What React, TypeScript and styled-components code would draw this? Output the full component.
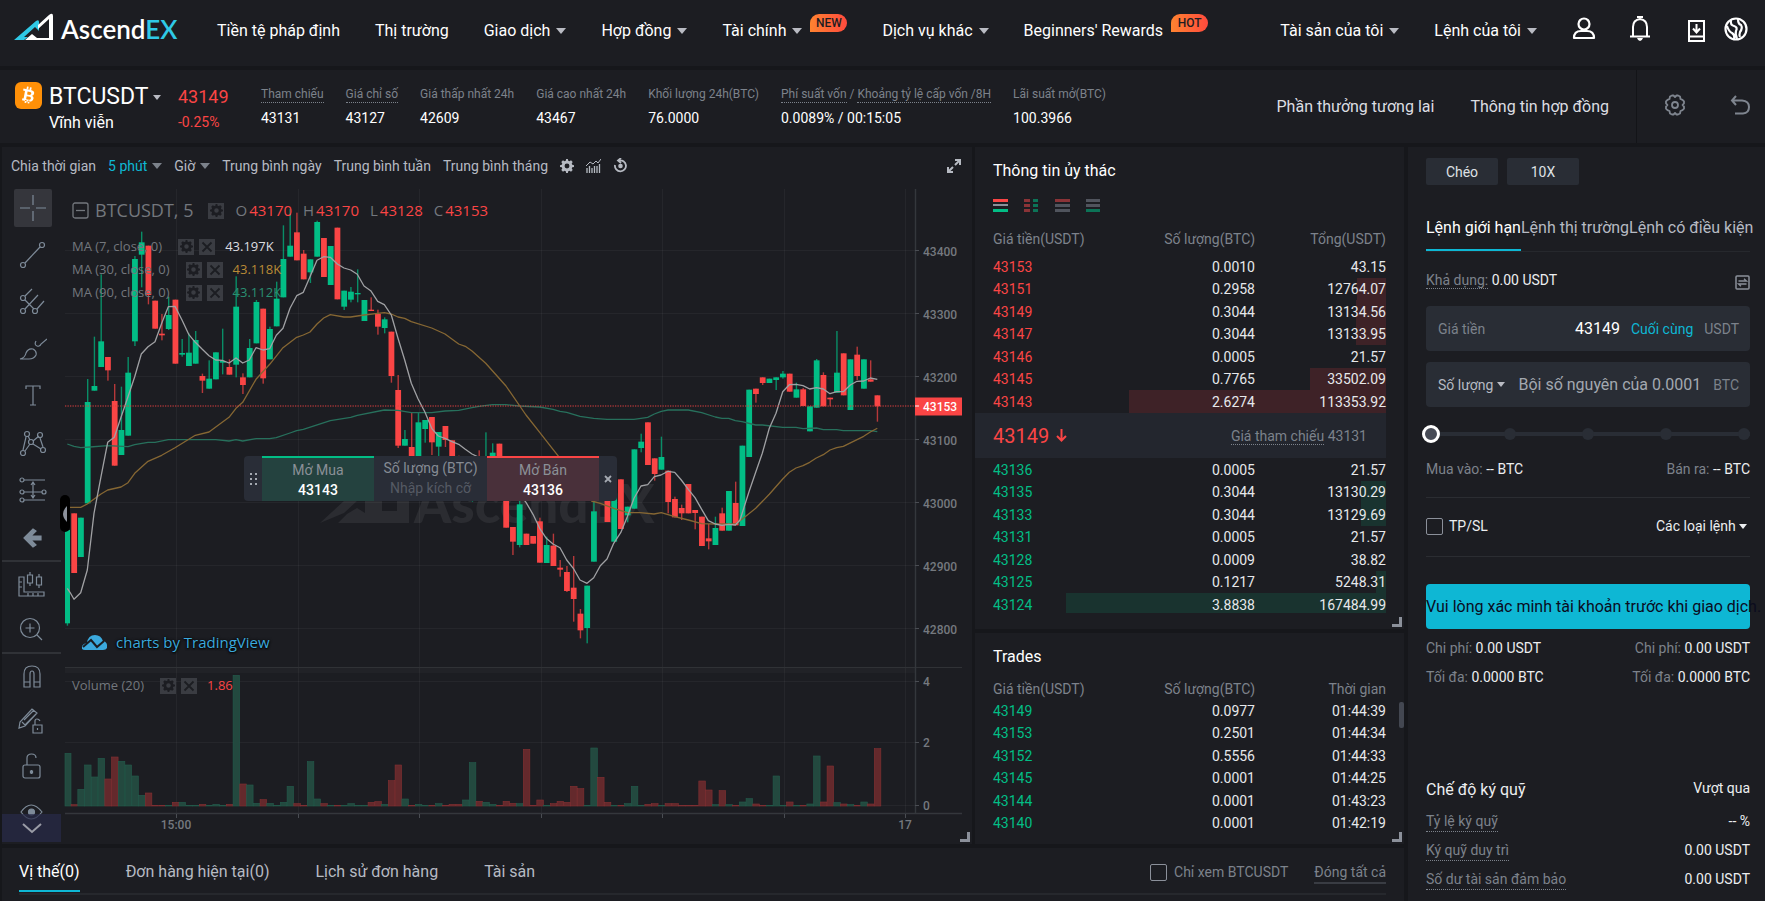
import React from "react";
import styled, { createGlobalStyle } from "styled-components";

const c = {
  gap: "#16171b",
  panel: "#1c1d22",
  line: "#26282d",
  field: "#292d35",
  text: "#ffffff",
  soft: "#b6bac2",
  dim: "#7c828b",
  red: "#fa4545",
  green: "#02bd85",
  teal: "#0eb7d4",
};

const GlobalStyle = createGlobalStyle`
  *, *::before, *::after { box-sizing: border-box; }
  body { margin: 0; background: ${c.gap}; color: ${c.text}; font: 14px/20px Roboto, "Liberation Sans", sans-serif; }
  button, input, select { font: inherit; color: inherit; }
  button { background: none; border: 0; padding: 0; cursor: pointer; }
  a { color: inherit; text-decoration: none; }
  svg { display: block; flex: none; }
`;

/* ---------- shared parts ---------- */

const Page = styled.div`
  display: flex;
  flex-direction: column;
  gap: 4px;
  min-height: 100vh;
  overflow: hidden;
`;

const Panel = styled.section`
  position: relative;
  background: ${c.panel};
`;

const Caret = styled.i<{ $small?: boolean; $color?: string }>`
  display: inline-block;
  flex: none;
  border-style: solid;
  border-color: transparent;
  border-width: ${(p) => (p.$small ? "5px 4px 0" : "6px 5px 0")};
  border-top-color: ${(p) => p.$color || "#b9bbc3"};
`;

const Dotted = styled.span`
  border-bottom: 1px dotted ${c.dim};
  color: ${c.dim};
`;

const Corner = styled.span`
  position: absolute;
  right: 2px;
  bottom: 2px;
  width: 10px;
  height: 10px;
  border: solid #8b909a;
  border-width: 0 3px 3px 0;
`;

const Title = styled.h2`
  margin: 0;
  font-size: 16px;
  line-height: 20px;
  font-weight: 400;
`;

const IconButton = styled.button`
  display: flex;
  align-items: center;
  justify-content: center;
`;

const CheckBox = styled.input`
  appearance: none;
  width: 17px;
  height: 17px;
  margin: 0;
  border: 1px solid #8b909a;
  border-radius: 2px;
  &:checked { background: ${c.teal}; }
`;

/* ---------- header ---------- */

const Header = styled.header`
  display: flex;
  align-items: flex-start;
  height: 66px;
  padding: 13px 17px 0 14px;
  background: ${c.panel};
  font-size: 16px;
`;

const Logo = styled.a`
  display: flex;
  width: 203px;
`;

const Nav = styled.nav`
  display: flex;
  align-items: flex-start;
  gap: 35px;
  margin-top: 8px;
  white-space: nowrap;
`;

const NavItem = styled.a`
  display: flex;
  align-items: center;
  gap: 6px;
`;

const Badge = styled.span`
  align-self: flex-start;
  width: 37px;
  height: 18px;
  margin: -7px 0 0 2px;
  border-radius: 9px 9px 9px 0;
  background: linear-gradient(90deg, #ff8330, #ff4a3d);
  color: #1c1d22;
  font-size: 12px;
  line-height: 18px;
  font-weight: 500;
  text-align: center;
`;

const HeaderRight = styled.div`
  display: flex;
  gap: 35px;
  margin-left: auto;
  white-space: nowrap;
`;

const HeaderIcons = styled.div`
  display: flex;
  gap: 18px;
  margin-top: 3px;
`;

/* ---------- market summary ---------- */

const Summary = styled.section`
  display: flex;
  height: 73px;
  background: ${c.panel};
  white-space: nowrap;
`;

const Pair = styled.div`
  display: flex;
  gap: 7px;
  width: 178px;
  padding: 12px 0 0 15px;
`;

const PairText = styled.div`
  padding-top: 2px;
  font-size: 16px;
  line-height: 20px;
`;

const PairName = styled.button`
  display: flex;
  align-items: center;
  gap: 4px;
  margin-bottom: 3px;
  font-size: 23px;
  line-height: 26px;
`;

const Last = styled.div`
  width: 83px;
  padding-top: 14px;
  color: ${c.red};
`;

const LastPrice = styled.div`
  margin-bottom: 2px;
  font-size: 18px;
  line-height: 26px;
`;

const Stats = styled.dl`
  display: flex;
  gap: 22px;
  margin: 0;
  padding-top: 17px;
`;

const StatLabel = styled.dt`
  height: 21px;
  color: ${c.dim};
  font-size: 12px;
  line-height: 15px;
  span { display: inline-block; }
`;

const StatValue = styled.dd`
  margin: 0;
`;

const SummaryLinks = styled.nav`
  display: flex;
  gap: 36px;
  margin-left: auto;
  padding: 27px 27px 0 0;
  color: #dcdee2;
  font-size: 16px;
`;

const SummaryTools = styled.div`
  display: flex;
  align-items: center;
  justify-content: space-between;
  width: 129px;
  padding: 0 15px 3px 27px;
  border-left: 1px solid #131418;
  color: #7f858f;
`;

/* ---------- main areas ---------- */

const Main = styled.main`
  display: flex;
  flex: 1;
  gap: 4px;
  padding-left: 2px;
`;

const LeftArea = styled.div`
  display: flex;
  flex: 1;
  flex-direction: column;
  gap: 4px;
  min-width: 0;
`;

const Upper = styled.div`
  display: flex;
  gap: 3px;
`;

const ChartPanel = styled(Panel)`
  flex: 1;
  min-width: 0;
`;

const ChartBar = styled.div`
  display: flex;
  align-items: center;
  gap: 12px;
  height: 37px;
  padding: 0 10px 0 9px;
  color: ${c.soft};
  white-space: nowrap;
`;

const BarButton = styled.button<{ $active?: boolean }>`
  display: flex;
  align-items: center;
  gap: 5px;
  color: ${(p) => (p.$active ? c.teal : c.soft)};
`;

const ExpandButton = styled(IconButton)`
  margin-left: auto;
`;

const ChartBody = styled.div`
  display: flex;
  height: 660px;
`;

const Tools = styled.div`
  position: relative;
  width: 59px;
  height: 658px;
  overflow: hidden;
  color: #7e8b99;
`;

const Tool = styled.button<{ $short?: boolean; $on?: boolean }>`
  display: flex;
  align-items: center;
  justify-content: center;
  width: 59px;
  height: ${(p) => (p.$short ? 45 : 47)}px;
  padding-left: ${(p) => (p.$short ? 0 : 3)}px;
  svg {
    padding: 5px;
    border-radius: 2px;
    background: ${(p) => (p.$on ? "#35363c" : "none")};
  }
`;

const ToolRule = styled.hr`
  height: 2px;
  margin: 0;
  border: 0;
  background: #303237;
`;

const ToolMore = styled.button`
  position: absolute;
  left: 0;
  bottom: 0;
  display: flex;
  align-items: center;
  justify-content: center;
  width: 59px;
  height: 28px;
  background: rgba(40, 43, 72, 0.7);
  color: #9a9ca6;
`;

const Plot = styled.div`
  position: relative;
  flex: 1;
  min-width: 0;
`;

const DrawerHandle = styled.button`
  position: absolute;
  left: -1px;
  top: 311px;
  display: flex;
  align-items: center;
  justify-content: center;
  width: 10px;
  height: 37px;
  border-radius: 5px;
  background: #000;
`;

const Legend = styled.div`
  position: absolute;
  left: 11px;
  top: 15px;
  color: #73777d;
  font-family: "Open Sans", sans-serif;
  font-size: 13px;
  line-height: 23px;
  white-space: nowrap;
`;

const VolumeLegend = styled(Legend)`
  top: 490px;
`;

const LegendTitle = styled.div`
  display: flex;
  align-items: center;
  margin-bottom: 13px;
  font-size: 15px;
`;

const LegendName = styled.span`
  margin: 0 15px 0 6px;
  font-size: 18px;
`;

const Ohlc = styled.span`
  margin-left: 11px;
  b { color: ${c.red}; font-weight: 400; margin-left: 2px; }
`;

const LegendRow = styled.div<{ $color: string }>`
  display: flex;
  align-items: center;
  gap: 5px;
  height: 23px;
  output { margin-left: 5px; color: ${(p) => p.$color}; }
`;

const LegendText = styled.span`
  margin-right: 11px;
`;

const Chip = styled.button`
  display: flex;
  align-items: center;
  justify-content: center;
  width: 16px;
  height: 16px;
  background: #3a3c42;
  color: #1c1d22;
`;

const QuickTrade = styled.div`
  position: absolute;
  left: 183px;
  top: 272px;
  display: flex;
  height: 45px;
  border-radius: 4px;
  background: #292d37;
  color: #858b94;
  overflow: hidden;
`;

const QuickSide = styled.button<{ $buy?: boolean }>`
  width: 112px;
  border-top: 2px solid ${(p) => (p.$buy ? c.green : c.red)};
  background: ${(p) => (p.$buy ? "#24423f" : "#49303a")};
  color: #8b9097;
  b { display: block; color: #fff; font-weight: 500; }
`;

const QuickSize = styled.label`
  width: 113px;
  padding-top: 2px;
  text-align: center;
  input {
    display: block;
    width: 100%;
    height: 20px;
    padding: 0;
    border: 0;
    background: none;
    text-align: center;
  }
  input::placeholder { color: #555a64; opacity: 1; }
`;

const QuickEdge = styled.button`
  display: flex;
  align-items: center;
  justify-content: center;
  width: 18px;
  color: #a4a9b1;
`;

const Credit = styled.a`
  position: absolute;
  left: 20px;
  top: 447px;
  display: flex;
  align-items: center;
  gap: 8px;
  color: #3ba9dd;
  font: 15px/22px "Open Sans", sans-serif;
  text-shadow: 0 0 3px #000, 0 1px 2px #000;
`;

/* ---------- order book and trades ---------- */

const Middle = styled.div`
  display: flex;
  flex-direction: column;
  gap: 4px;
  width: 429px;
`;

const Book = styled(Panel)`
  padding: 14px 18px 16px;
`;

const Trades = styled(Panel)`
  flex: 1;
  padding: 14px 18px 0;
`;

const BookModes = styled.div`
  display: flex;
  gap: 16px;
  margin: 18px 0 17px;
`;

const DataTable = styled.table`
  width: 100%;
  border-collapse: collapse;
  table-layout: fixed;
  th, td { padding: 0; text-align: right; }
  th { width: 131px; font-weight: 400; color: ${c.dim}; vertical-align: top; }
  th:first-child { width: auto; }
  th:first-child, td:first-child { text-align: left; }
`;

const HeadRow = styled.tr<{ $tall?: boolean }>`
  height: ${(p) => (p.$tall ? 26 : 20)}px;
`;

const DataRow = styled.tr<{ $ask?: boolean }>`
  height: 22px;
  color: #e6e8eb;
  background: linear-gradient(${(p) => (p.$ask ? "#3e2227, #3e2227" : "#19332f, #19332f")}) right / 0 100% no-repeat;
  &:nth-child(odd) { height: 23px; }
  td:first-child { color: ${(p) => (p.$ask ? c.red : c.green)}; }
`;

const Bids = styled.div`
  height: 155px;
  overflow: hidden;
`;

const MidPrice = styled.div`
  display: flex;
  align-items: center;
  height: 45px;
  margin-left: -18px;
  padding: 0 19px 0 18px;
  background: #23262e;
  color: ${c.dim};
  strong { margin-right: 7px; color: ${c.red}; font-size: 20px; font-weight: 400; }
  p { margin: 0 0 0 auto; }
`;

const TradesTitle = styled(Title)`
  margin-bottom: 12px;
`;

const Thumb = styled.span`
  position: absolute;
  right: 0;
  top: 69px;
  width: 5px;
  height: 26px;
  border-radius: 2px;
  background: #434751;
`;

/* ---------- positions bar ---------- */

const Positions = styled(Panel)`
  flex: 1;
  padding: 0 18px 0 17px;
`;

const PositionsRow = styled.div`
  display: flex;
  align-items: flex-start;
  height: 47px;
  padding-top: 14px;
  border-bottom: 2px solid ${c.line};
  white-space: nowrap;
`;

const PositionTab = styled.button<{ $active?: boolean }>`
  height: 30px;
  margin-right: 46px;
  padding-bottom: 9px;
  border-bottom: 2px solid ${(p) => (p.$active ? c.teal : "transparent")};
  color: ${(p) => (p.$active ? "#fff" : c.soft)};
  font-size: 16px;
  line-height: 20px;
`;

const OnlyPair = styled.label`
  display: flex;
  align-items: center;
  gap: 7px;
  margin: 0 26px 0 auto;
  color: ${c.dim};
`;

const CloseAll = styled.button`
  border-bottom: 2px solid #393c43;
  color: ${c.dim};
`;

/* ---------- order form ---------- */

const Form = styled.form`
  width: 357px;
  padding: 11px 15px 0 18px;
  background: ${c.panel};
  overflow: hidden;
  white-space: nowrap;
`;

const Modes = styled.div`
  display: flex;
  gap: 9px;
`;

const Mode = styled.button`
  width: 72px;
  height: 27px;
  border-radius: 2px;
  background: ${c.field};
  color: #dfe1e5;
`;

const OrderTabs = styled.div`
  display: flex;
  margin: 33px 0 18px;
  border-bottom: 1px solid ${c.line};
`;

const OrderTab = styled.button<{ $active?: boolean }>`
  padding-bottom: 11px;
  border-bottom: 2px solid ${(p) => (p.$active ? c.teal : "transparent")};
  color: ${(p) => (p.$active ? "#fff" : c.soft)};
  font-size: 16px;
`;

const Row = styled.div`
  display: flex;
  justify-content: space-between;
  color: #eceef0;
`;

const Key = styled.span`
  color: ${c.dim};
`;

const Balance = styled(Row)`
  align-items: flex-end;
  margin-bottom: 16px;
`;

const Field = styled.div`
  display: flex;
  align-items: center;
  height: 45px;
  margin-bottom: 11px;
  padding: 0 11px 0 12px;
  border-radius: 4px;
  background: ${c.field};
  color: ${c.dim};
  input {
    flex: 1;
    min-width: 0;
    padding: 0;
    border: 0;
    background: none;
    color: #fff;
    font-size: 16px;
    text-align: right;
  }
  input::placeholder { color: #a3a8b0; opacity: 1; }
`;

const LastButton = styled.button`
  margin: 0 11px;
  color: ${c.teal};
`;

const Unit = styled.span`
  margin-left: 12px;
`;

const Picker = styled.span<{ $light?: boolean }>`
  display: flex;
  align-items: center;
  color: ${(p) => (p.$light ? "#eceef0" : c.soft)};
  select {
    appearance: none;
    margin: 0 3px 0 0;
    padding: 0;
    border: 0;
    background: none;
  }
`;

const Slider = styled.div`
  position: relative;
  display: flex;
  justify-content: space-between;
  align-items: center;
  height: 18px;
  margin: 18px 0 16px;
  background: linear-gradient(${c.field}, ${c.field}) center / 100% 4px no-repeat;
  input {
    position: absolute;
    left: -4px;
    top: 0;
    width: calc(100% + 4px);
    height: 18px;
    margin: 0;
    appearance: none;
    background: none;
  }
  input::-webkit-slider-thumb {
    appearance: none;
    width: 18px;
    height: 18px;
    border: 3px solid #fff;
    border-radius: 50%;
    background: #464a55;
  }
`;

const Stop = styled.i`
  width: 12px;
  height: 12px;
  border-radius: 50%;
  background: ${c.field};
`;

const Rule = styled.hr`
  height: 1px;
  margin: 18px 0;
  border: 0;
  background: #2b2d32;
`;

const TpSl = styled.label`
  display: flex;
  align-items: center;
  gap: 6px;
`;

const OrderKinds = styled(Row)`
  margin-bottom: 20px;
  padding-right: 3px;
`;

const Submit = styled.button`
  display: block;
  width: 100%;
  height: 45px;
  margin: 27px 0 9px;
  border-radius: 4px;
  background: ${c.teal};
  color: #0b0c1e;
  font-size: 16px;
  text-align: left;
`;

const CostRow = styled(Row)`
  margin-bottom: 9px;
`;

const MarginHead = styled(Row)`
  margin: 93px 0 11px;
`;

const MarginMode = styled.span`
  line-height: 16px;
`;

const MarginRow = styled(Row)`
  height: 29px;
  ${Dotted} { height: 21px; }
`;

/* ---------- candle data ---------- */

// up/down, body top, body bottom, high, low, volume; vertical values in thirds of a chart unit
type Candle = [0 | 1, number, number, number, number, number];
const candles: Candle[] = [
  [1, 1050, 1330, 1050, 1337, 158], [0, 1000, 1179, 1000, 1179, 4], [1, 1013, 1131, 1013, 1131, 50],
  [1, 666, 970, 597, 970, 123], [1, 618, 632, 470, 632, 87], [1, 484, 561, 283, 561, 143],
  [0, 531, 571, 531, 602, 81], [0, 663, 857, 612, 857, 147], [1, 750, 825, 620, 825, 134],
  [1, 578, 767, 531, 767, 123], [1, 237, 484, 228, 498, 90], [1, 187, 224, 155, 322, 32],
  [0, 197, 345, 197, 373, 39], [0, 362, 446, 362, 446, 2], [0, 461, 466, 402, 481, 2],
  [1, 405, 447, 350, 450, 2], [0, 359, 551, 359, 551, 11], [1, 519, 524, 477, 530, 11],
  [1, 518, 558, 460, 558, 2], [1, 480, 551, 453, 551, 2], [0, 588, 602, 581, 639, 5],
  [1, 596, 626, 541, 626, 2], [1, 517, 598, 517, 598, 5], [1, 543, 548, 446, 583, 2],
  [0, 561, 584, 538, 584, 5], [1, 380, 554, 289, 592, 392], [0, 592, 615, 580, 642, 66],
  [1, 504, 592, 477, 592, 63], [1, 366, 490, 360, 490, 8], [0, 386, 595, 386, 611, 19],
  [1, 447, 538, 440, 538, 8], [1, 356, 439, 305, 439, 2], [1, 237, 352, 136, 352, 11],
  [1, 197, 230, 87, 230, 59], [0, 157, 241, 98, 241, 7], [0, 221, 298, 210, 298, 2],
  [1, 238, 277, 238, 309, 133], [1, 126, 230, 122, 230, 21], [0, 174, 291, 174, 291, 7],
  [1, 198, 315, 198, 315, 2], [0, 143, 358, 143, 358, 2], [1, 332, 380, 332, 390, 2],
  [1, 335, 359, 321, 367, 7], [1, 339, 343, 268, 367, 2], [1, 360, 423, 360, 423, 2],
  [0, 389, 393, 352, 393, 11], [0, 402, 440, 389, 464, 13], [1, 418, 444, 412, 460, 5],
  [0, 455, 588, 455, 608, 76], [0, 630, 797, 585, 804, 123], [1, 777, 797, 750, 797, 21],
  [0, 801, 860, 697, 860, 2], [1, 727, 840, 697, 840, 5], [1, 720, 747, 720, 788, 2],
  [0, 711, 787, 711, 825, 2], [1, 756, 800, 756, 840, 7], [0, 738, 780, 738, 801, 2],
  [0, 781, 840, 781, 840, 5], [0, 830, 870, 827, 870, 5], [1, 860, 900, 850, 900, 18],
  [1, 850, 900, 850, 965, 130], [0, 840, 900, 811, 900, 14], [1, 840, 900, 757, 900, 11],
  [1, 818, 860, 790, 860, 5], [0, 791, 950, 791, 950, 2], [0, 940, 1043, 940, 1043, 14],
  [0, 1041, 1085, 1041, 1125, 8], [1, 973, 1095, 940, 1102, 7], [0, 1061, 1095, 1061, 1095, 170],
  [0, 1068, 1091, 1068, 1091, 2], [0, 1024, 1148, 1013, 1148, 18], [1, 1095, 1149, 1070, 1149, 2],
  [0, 1097, 1158, 1061, 1158, 7], [0, 1163, 1169, 1140, 1190, 14], [0, 1176, 1233, 1158, 1236, 11],
  [0, 1223, 1257, 1128, 1325, 59], [0, 1301, 1351, 1287, 1375, 52], [1, 1217, 1344, 1217, 1390, 2],
  [1, 994, 1145, 950, 1145, 174], [0, 880, 950, 880, 950, 86], [0, 900, 1026, 900, 1026, 11],
  [1, 940, 1085, 940, 1085, 2], [0, 898, 1047, 898, 1047, 2], [1, 980, 1006, 980, 1027, 7],
  [1, 808, 986, 808, 986, 59], [1, 785, 804, 761, 817, 2], [0, 727, 855, 727, 855, 5],
  [0, 835, 882, 835, 902, 7], [1, 831, 869, 770, 869, 2], [0, 872, 966, 872, 1000, 7],
  [0, 957, 1012, 950, 1012, 7], [0, 984, 1000, 974, 1020, 2], [0, 912, 1000, 912, 1000, 2],
  [0, 990, 999, 990, 1048, 2], [0, 1010, 1098, 1010, 1098, 75], [0, 1075, 1084, 1032, 1108, 48],
  [1, 1044, 1095, 1010, 1095, 4], [0, 1000, 1052, 983, 1052, 46], [1, 933, 1052, 933, 1052, 4],
  [0, 969, 1036, 905, 1036, 2], [1, 797, 1038, 797, 1038, 12], [1, 629, 831, 629, 831, 22],
  [0, 626, 642, 626, 668, 6], [0, 592, 609, 592, 615, 2], [1, 596, 609, 596, 609, 2],
  [1, 592, 600, 592, 630, 90], [1, 581, 592, 573, 596, 2], [0, 581, 635, 581, 635, 12],
  [1, 628, 653, 608, 653, 2], [0, 628, 678, 624, 678, 2], [1, 679, 754, 679, 754, 6],
  [1, 541, 683, 537, 683, 150], [0, 585, 679, 577, 679, 12], [0, 653, 658, 653, 679, 120],
  [1, 578, 638, 453, 638, 10], [0, 520, 646, 520, 646, 6], [1, 538, 690, 538, 690, 4],
  [0, 524, 588, 500, 600, 2], [1, 538, 626, 538, 626, 12], [0, 598, 605, 541, 605, 6],
  [0, 646, 679, 646, 725, 172],
];

const shift = (dx: number, pts: number[]) => pts.map((v, i) => (i % 2 ? v : v + dx));

const ma7 = [
  ...[202, 1225, 210, 1237, 222, 1258, 242, 1238, 262, 1170, 282, 1000, 303, 890, 323, 787, 343, 772, 363, 712, 384, 650, 404, 590, 424, 522, 444, 500, 465, 485, 485, 430, 505, 380, 525, 379, 546, 420, 566, 463, 586, 487, 607, 508, 627, 527, 647, 540, 667, 541, 687, 549, 708, 534, 728, 549, 748, 540, 768, 503, 789, 510, 809, 506, 829, 466, 849, 445, 870, 385],
  ...shift(870, [20, 347, 40, 337, 60, 290, 81, 241, 101, 230, 121, 232, 142, 252, 162, 264, 182, 270, 202, 283, 222, 318, 242, 332, 263, 364, 283, 374, 304, 405, 324, 475, 344, 540, 364, 610, 384, 656, 405, 697, 425, 745, 445, 768, 465, 775, 486, 785, 506, 793, 526, 808, 546, 822, 567, 832, 587, 838, 607, 850, 627, 868, 648, 890, 668, 915, 688, 940, 708, 967, 729, 1003, 749, 1045, 769, 1075, 789, 1092, 810, 1103, 830, 1140, 850, 1165, 870, 1200, 891, 1210, 911, 1193, 931, 1157, 951, 1137, 971, 1090, 992, 1058, 1012, 1010, 1032, 955, 1053, 918, 1073, 914, 1093, 890, 1113, 885, 1134, 874, 1154, 877, 1174, 900]),
  ...shift(1920, [145, 928, 165, 953, 185, 988, 205, 1022, 226, 1032, 246, 1036, 266, 1033, 286, 1035, 300, 1020, 327, 935, 347, 877, 367, 820, 388, 745, 408, 700, 428, 635, 448, 614, 468, 613, 489, 617, 509, 627, 529, 623, 550, 627, 570, 641, 590, 635, 610, 635, 631, 615, 651, 604, 671, 603, 691, 594, 712, 598]),
];
const ma30 = [
  ...[202, 982, 242, 982, 262, 972, 303, 942, 323, 930, 363, 921, 384, 908, 404, 880, 444, 844, 485, 826, 525, 803, 586, 766, 627, 756, 687, 712, 708, 685, 728, 667, 768, 598, 809, 553, 849, 503],
  ...shift(870, [20, 472, 40, 465, 60, 456, 81, 432, 101, 414, 121, 404, 162, 411, 182, 411, 222, 405, 283, 398, 304, 402, 324, 411, 344, 415, 364, 425, 425, 444, 465, 462, 506, 492, 526, 499, 546, 513, 587, 550, 648, 618, 708, 705, 749, 757, 789, 808, 830, 860, 870, 920, 905, 963, 931, 970, 971, 985, 1012, 998]),
  ...shift(1920, [0, 998, 42, 1002, 64, 998, 104, 1010, 145, 1020, 185, 1031, 226, 1032, 286, 1032, 306, 1018, 347, 985, 388, 943, 428, 897, 448, 877, 468, 864, 489, 857, 509, 847, 529, 834, 550, 824, 570, 810, 590, 803, 610, 799, 671, 769, 691, 756, 712, 745]),
];
const ma90 = [
  ...[202, 792, 222, 799, 242, 803, 270, 801, 323, 797, 384, 800, 404, 794, 444, 787, 465, 787, 505, 779, 647, 779, 687, 783, 708, 779, 728, 783, 768, 776, 809, 776, 829, 773, 870, 759],
  ...shift(870, [20, 752, 40, 748, 121, 722, 182, 712, 202, 706, 283, 690, 324, 691, 364, 698, 425, 698, 465, 693, 506, 691, 546, 683, 567, 679, 607, 674, 648, 674, 688, 678, 749, 681, 789, 688, 810, 694, 830, 697, 870, 709, 911, 715, 951, 718, 1032, 718]),
  ...shift(1920, [23, 712, 43, 702, 64, 694, 84, 690, 145, 690, 185, 698, 226, 711, 246, 715, 266, 715, 286, 722, 306, 725, 347, 735, 367, 735, 428, 742, 468, 742, 489, 746, 529, 744, 550, 749, 590, 749, 610, 752, 691, 752, 712, 755]),
];

const px = (u: number) => u / 3 - 61;
const py = (v: number) => v / 3 - 4;
const path = (pts: number[]) => {
  let d = "";
  for (let i = 0; i < pts.length; i += 2) d += `${i ? "L" : "M"}${px(pts[i]).toFixed(1)} ${py(pts[i + 1]).toFixed(1)}`;
  return d;
};
const barX = (i: number) => px(202) + 6.75 * i;

const priceTicks = [43400, 43300, 43200, 43100, 43000, 42900, 42800];
const priceY = (p: number) => 67 + (43400 - p) * 0.6295;
const timeX = [115, 237, 358, 480, 601, 723, 844];
const volumeTicks: [string, number][] = [["4", 498], ["2", 559], ["0", 622]];

const AxisText = styled.text<{ $light?: boolean }>`
  fill: ${(p) => (p.$light ? "#fff" : "#75797f")};
  font: 500 12px Roboto, sans-serif;
`;

const Mark = styled.text`
  fill: #2b2c31;
  font: 900 53px Lato, sans-serif;
`;

const ChartSvg = styled.svg`
  width: 100%;
  height: 660px;
`;

function Chart() {
  return (
    <ChartSvg viewBox="0 0 911 660" preserveAspectRatio="xMinYMin meet" role="img" aria-label="BTCUSDT, 5">
      <g fill="#2b2c31">
        <path d="M259 339l50-46h12v46h-44l9-9 10-6 8 5h6v-25l-27 25zM304 293h10v34h22v-34h12v46h-44z" />
        <Mark x="353" y="339">AscendEX</Mark>
      </g>
      <g stroke="#fff" strokeOpacity=".045" shapeRendering="crispEdges">
        {timeX.map((x) => <path key={x} d={`M${x + 0.5} 5V629`} />)}
        {priceTicks.map((p) => <path key={p} d={`M4 ${Math.round(priceY(p)) - 0.5}H854`} />)}
        {volumeTicks.map(([t, y]) => <path key={t} d={`M4 ${y - 0.5}H854`} />)}
      </g>
      <path d="M4 483h850v6H4z" fill="#fff" opacity=".025" />
      <path d="M4 483.500h897" stroke="#303236" />
      {candles.map(([up, , , , , v], i) => (
        <rect key={i} x={Math.max(4, barX(i) - 3)} y={622 - v / 3} width={i ? 6.5 : 6} height={v / 3}
          fill={up ? "#23493f" : "#64292c"} stroke={up ? "#235c4c" : "#843033"} strokeWidth=".6" />
      ))}
      {candles.map(([up, t, b, h, l], i) => {
        const x = barX(i);
        return (
          <g key={i} fill={up ? c.green : c.red}>
            <rect x={x - 0.6} y={py(h)} width="1.4" height={(l - h) / 3} opacity=".7" />
            <rect x={Math.max(4, x - 2.8)} y={py(t)} width={i ? 5.8 : 5} height={Math.max(1, (b - t) / 3)} />
          </g>
        );
      })}
      <g fill="none" strokeWidth="1.3" strokeLinejoin="round">
        <path d={path(ma90)} stroke="#27705c" />
        <path d={path(ma30)} stroke="#866733" />
        <path d={path(ma7)} stroke="#a0a1a4" />
      </g>
      <path d="M4 222h850" stroke="#e04040" strokeDasharray="1.3 1.2" />
      <path d="M854.500 5V629M4 629.500H901" stroke="#34373c" strokeWidth="1.4" />
      <g stroke="#4a4d53">
        {timeX.map((x) => <path key={x} d={`M${x + 0.5} 630v4`} />)}
        {priceTicks.map((p) => <path key={p} d={`M854 ${Math.round(priceY(p)) - 0.5}h4`} />)}
        {volumeTicks.map(([t, y]) => <path key={t} d={`M854 ${y - 0.5}h4`} />)}
      </g>
      {priceTicks.map((p) => <AxisText key={p} x="862" y={priceY(p) + 5}>{p}</AxisText>)}
      {volumeTicks.map(([t, y]) => <AxisText key={t} x="862" y={y + 4}>{t}</AxisText>)}
      <AxisText x="115" y="645" textAnchor="middle">15:00</AxisText>
      <AxisText x="844" y="645" textAnchor="middle">17</AxisText>
      <path d="M854 213.500h47v18h-47z" fill={c.red} />
      <path d="M854 222h4" stroke="#fff" />
      <AxisText $light x="862" y="227">43153</AxisText>
    </ChartSvg>
  );
}

/* ---------- icons ---------- */

function LogoArt() {
  return (
    <svg width="170" height="36" viewBox="0 0 170 36" aria-label="AscendEX">
      <path d="M0 27L22 8q3-2 3 1v9l-4-4L10 24h4l-4 3z" fill="#2fc9e6" />
      <path d="M11 27l7-6 5 4h12V6L24 16v-4L35 2q4-3 4 1v24z" fill="#fff" />
      <text x="47" y="26" fontFamily="Lato, sans-serif" fontSize="26" fontWeight="600" fill="#fff">
        Ascend<tspan fill="#2fc9e6">EX</tspan>
      </text>
    </svg>
  );
}

const gearPath =
  "M7 0h2l.4 2 1.500.6L12.600 1.500 14.500 3.400 13.400 5.100 14 6.600l2 .4v2l-2 .4-.6 1.500 1.100 1.700-1.900 1.900-1.700-1.100-1.500.6L9 16H7l-.4-2-1.500-.6-1.700 1.100-1.900-1.900 1.100-1.700L2 9.400 0 9V7l2-.4.6-1.500L1.500 3.400 3.400 1.500l1.700 1.100L6.600 2zM8 5.200A2.800 2.800 0 1 0 8 10.800 2.800 2.800 0 0 0 8 5.200z";

const Gear = ({ size }: { size: number }) => (
  <svg width={size} height={size} viewBox="0 0 16 16"><path d={gearPath} fill="currentColor" fillRule="evenodd" /></svg>
);

const Cross = () => (
  <svg width="12" height="12" viewBox="0 0 12 12"><path d="M1.500 1.500l9 9M10.500 1.500l-9 9" stroke="currentColor" strokeWidth="1.800" /></svg>
);

const toolArt: React.ReactNode[] = [
  <path d="M14 1v10M14 17v10M1 14h10M17 14h10" />,
  <><circle cx="4" cy="24" r="2.500" /><circle cx="23" cy="4" r="2.500" /><path d="M6 22L21 6" /></>,
  <><circle cx="4" cy="10" r="2.500" /><circle cx="4" cy="23" r="2.500" /><circle cx="16" cy="23" r="2.500" /><path d="M6 21L19 7M6 8l7-7M18 21l7-8M6 12l9 9" /></>,
  <path d="M1 24q5-1 6-6 2-5 7-4 4 2 3 6-2 4-7 4zM17 6q-2 4 1 5 3 1 4-2l6-5" />,
  <path d="M7 7V4h14v3M14 4v19M11 23h6" />,
  <><circle cx="4" cy="24" r="2.500" /><circle cx="8" cy="5" r="2.500" /><circle cx="12" cy="13" r="2.500" /><circle cx="21" cy="6" r="2.500" /><circle cx="24" cy="21" r="2.500" /><path d="M4 21L7 8M9 7l2 4M14 12l6-5M21 9l3 9M6 22l5-7M14 15l8 5" /></>,
  <><circle cx="3" cy="4" r="2" /><circle cx="3" cy="16" r="2" /><circle cx="25" cy="16" r="2" /><circle cx="3" cy="24" r="2" /><path d="M5 4h21M5 16h18M5 24h21M14 7v14M12 9l2-3 2 3M12 19l2 3 2-3" /></>,
  <path d="M5 15L14 6l3 2-5 5h10v4H12l5 5-3 2z" fill="currentColor" />,
];
const toolArtLow: React.ReactNode[] = [
  <><path d="M1 6h5v15h20v4H1zM1 11h3M1 16h3M10 22v3M15 22v3M20 22v3M12 1v3M12 12v3M9.500 4h5v8h-5zM21 3v3M21 14v3M18.500 6h5v8h-5z" /></>,
  <><circle cx="12" cy="12" r="9.500" /><path d="M19 19l5 5M7.500 12h9M12 7.500v9" /></>,
];
const toolArtEnd: React.ReactNode[] = [
  <path d="M6 24V11q0-8 8-8t8 8v13h-6V11q0-3-2-3t-2 3v13zM6 19h6M16 19h6" />,
  <><path d="M1 20l1-6L14 1l5 4L7 18zM4 14l3 3L18 6M6 12L16 2M15 17h9v8h-9zM17 17v-4q0-2 2-2t3 2M19.500 20v2" /></>,
  <><rect x="5" y="12" width="17" height="13" rx="2" /><path d="M9 12V5q0-4 4.500-4T18 5M13.500 17v4" /><path d="M12.500 18h2v2h-2z" fill="currentColor" /></>,
  <><path d="M3 14q10-14 21 0-11 14-21 0z" /><circle cx="13.500" cy="14" r="3" fill="currentColor" /></>,
];

const ToolIcon = ({ children }: { children: React.ReactNode }) => (
  <svg width="38" height="38" viewBox="0 0 28 28" fill="none" stroke="currentColor" strokeWidth="1.200">{children}</svg>
);

const CollapseIcon = () => (
  <svg width="17" height="17" viewBox="0 0 17 17" fill="none" stroke="currentColor"><rect x="1" y="1" width="15" height="15" rx="2" strokeWidth="1.300" /><path d="M4 8.500h9" strokeWidth="1.300" /></svg>
);

const bookModes = [
  [["M0 0h15v3H0z", "#fa4545"], ["M0 5h15v2H0z", "#8b909a"], ["M0 10h15v3H0z", "#02bd85"]],
  [["M0 0h6v3H0zM0 5h6v3H0zM0 10h6v3H0z", "#8a3337"], ["M9 0h5v3H9zM9 5h5v3H9zM9 10h5v3H9z", "#0c7357"]],
  [["M0 0h15v3H0z", "#8a3337"], ["M0 5h15v3H0zM0 10h15v3H0z", "#50545d"]],
  [["M0 0h14v3H0zM0 5h14v3H0z", "#50545d"], ["M0 10h14v3H0z", "#0c7357"]],
];

/* ---------- data ---------- */

const asks: [string, string, string, number][] = [
  ["43153", "0.0010", "43.15", 0], ["43151", "0.2958", "12764.07", 29], ["43149", "0.3044", "13134.56", 30],
  ["43147", "0.3044", "13133.95", 30], ["43146", "0.0005", "21.57", 0], ["43145", "0.7765", "33502.09", 76],
  ["43143", "2.6274", "113353.92", 257],
];
const bids: [string, string, string, number][] = [
  ["43136", "0.0005", "21.57", 0], ["43135", "0.3044", "13130.29", 25], ["43133", "0.3044", "13129.69", 25],
  ["43131", "0.0005", "21.57", 0], ["43128", "0.0009", "38.82", 0], ["43125", "0.1217", "5248.31", 10],
  ["43124", "3.8838", "167484.99", 320],
];
const trades = [
  ["43149", "0.0977", "01:44:39"], ["43153", "0.2501", "01:44:34"], ["43152", "0.5556", "01:44:33"],
  ["43145", "0.0001", "01:44:25"], ["43144", "0.0001", "01:43:23"], ["43140", "0.0001", "01:42:19"],
];
const stats: [React.ReactNode, string][] = [
  [<Dotted>Tham chiếu</Dotted>, "43131"],
  [<Dotted>Giá chỉ số</Dotted>, "43127"],
  ["Giá thấp nhất 24h", "42609"],
  ["Giá cao nhất 24h", "43467"],
  ["Khối lượng 24h(BTC)", "76.0000"],
  [<><Dotted>Phí suất vốn</Dotted> / <Dotted>Khoảng tỷ lệ cấp vốn /8H</Dotted></>, "0.0089% / 00:15:05"],
  ["Lãi suất mở(BTC)", "100.3966"],
];
const averages: [string, string, string][] = [
  ["MA (7, close, 0)", "43.197K", "#dcdde0"],
  ["MA (30, close, 0)", "43.118K", "#b98a36"],
  ["MA (90, close, 0)", "43.112K", "#2a8f72"],
];

function Rows({ rows, ask }: { rows: typeof asks; ask?: boolean }) {
  return (
    <tbody>
      {rows.map(([p, q, t, w]) => (
        <DataRow key={p} $ask={ask} style={{ backgroundSize: `${(w / 393) * 100}% 100%` }}>
          <td>{p}</td><td>{q}</td><td>{t}</td>
        </DataRow>
      ))}
    </tbody>
  );
}

const stop = (e: React.FormEvent) => e.preventDefault();

export default function App() {
  return (
    <Page>
      <GlobalStyle />
      <Header>
        <Logo href="#"><LogoArt /></Logo>
        <Nav>
          <NavItem href="#">Tiền tệ pháp định</NavItem>
          <NavItem href="#">Thị trường</NavItem>
          <NavItem href="#">Giao dịch <Caret /></NavItem>
          <NavItem href="#">Hợp đồng <Caret /></NavItem>
          <NavItem href="#">Tài chính <Caret /><Badge>NEW</Badge></NavItem>
          <NavItem href="#">Dịch vụ khác <Caret /></NavItem>
          <NavItem href="#">Beginners' Rewards<Badge>HOT</Badge></NavItem>
        </Nav>
        <HeaderRight>
          <Nav>
            <NavItem href="#">Tài sản của tôi <Caret /></NavItem>
            <NavItem href="#">Lệnh của tôi <Caret /></NavItem>
          </Nav>
          <HeaderIcons>
            <IconButton aria-label="Account">
              <svg width="24" height="26" viewBox="0 0 24 26" fill="none" stroke="#fff" strokeWidth="2.200"><circle cx="12" cy="8" r="5.500" /><path d="M2 22q0-7 7-7h6q7 0 7 7z" strokeLinejoin="round" /></svg>
            </IconButton>
            <IconButton aria-label="Notifications">
              <svg width="55" height="26" viewBox="-14 0 55 26" fill="none" stroke="#fff" strokeWidth="2"><path d="M5 20V11q0-7 7-8 7 1 7 8v9M2 20.500h20M9 1h6" /><path d="M9 22h6q-1 3-3 3t-3-3z" fill="#fff" stroke="none" /></svg>
            </IconButton>
            <IconButton aria-label="Download">
              <svg width="19" height="26" viewBox="0 0 19 26" fill="none" stroke="#fff" strokeWidth="2"><path d="M2 5h15v20H2zM2 20.500h15" /><path d="M9.500 8v8M6 12.500l3.500 4 3.500-4" /></svg>
            </IconButton>
            <IconButton aria-label="Language">
              <svg width="24" height="24" viewBox="0 0 24 24" fill="none" stroke="#fff" strokeWidth="2.200"><circle cx="12" cy="12" r="10.500" /><path d="M7 3q-1 5 3 6 4 1 2 5-1 3 1 8M3 9q2 6 5 7 3 2 2 6M14 2q0 5 3 6 2 3-1 7-1 3 0 5" /></svg>
            </IconButton>
          </HeaderIcons>
        </HeaderRight>
      </Header>

      <Summary>
        <Pair>
          <svg width="27" height="27" viewBox="0 0 27 27">
            <rect width="27" height="27" rx="6" fill="#ff9008" />
            <path d="M8.500 6.500l7.500 1.500q4 1 3 4-.5 1.500-2 1.700 2 .8 1.500 3-1 3.500-5 3L7 18.300l.4-2 1.200.2L10 9l-1.900-.4zM12.600 9.500l-.5 3 2.500.4q1.500 0 1.700-1.300.2-1.400-1.300-1.700zM11.700 14.300l-.6 3 3 .5q1.500 0 1.800-1.400.2-1.300-1.300-1.600zM12 4.500l1.700.3-.5 2.500-1.700-.3zM15 5.200l1.700.3-.5 2.500-1.700-.3zM10 18l1.700.3-.5 2.700-1.700-.3zM13 18.500l1.700.3-.5 2.700-1.700-.3z" fill="#fff" fillRule="evenodd" />
          </svg>
          <PairText>
            <PairName>BTCUSDT <Caret $small /></PairName>
            Vĩnh viễn
          </PairText>
        </Pair>
        <Last>
          <LastPrice>43149</LastPrice>
          -0.25%
        </Last>
        <Stats>
          {stats.map(([label, value]) => (
            <div key={value}><StatLabel>{label}</StatLabel><StatValue>{value}</StatValue></div>
          ))}
        </Stats>
        <SummaryLinks>
          <a href="#">Phần thưởng tương lai</a>
          <a href="#">Thông tin hợp đồng</a>
        </SummaryLinks>
        <SummaryTools>
          <IconButton aria-label="Settings">
            <svg width="22" height="22" viewBox="0 0 22 22" fill="none" stroke="currentColor" strokeWidth="1.800" strokeLinejoin="round"><path d="M8 1.500h1.500L11 3l1.500-1.500H14l2 1 .5 2.500 2 .8 1.500 1.500v2L18.500 11l1.500 1.700v2l-1.500 1.500-2 .8-.5 2.500-2 1h-1.500L11 19l-1.500 1.500H8l-2-1-.5-2.500-2-.8L2 14.700v-2L3.500 11 2 9.300v-2l1.500-1.500 2-.8L6 2.500z" /><circle cx="11" cy="11" r="3" /></svg>
          </IconButton>
          <IconButton aria-label="Undo">
            <svg width="20" height="20" viewBox="0 0 20 20" fill="none" stroke="currentColor" strokeWidth="2"><path d="M6 1L2 5.500 6 10M2 5.500h10q7 .5 7 6.500 0 6-6 6.500H5" /></svg>
          </IconButton>
        </SummaryTools>
      </Summary>

      <Main>
        <LeftArea>
          <Upper>
            <ChartPanel>
              <ChartBar>
                <span>Chia thời gian</span>
                <BarButton $active>5 phút <Caret $color="#7c828b" /></BarButton>
                <BarButton>Giờ <Caret $color="#7c828b" /></BarButton>
                <BarButton>Trung bình ngày</BarButton>
                <BarButton>Trung bình tuần</BarButton>
                <BarButton>Trung bình tháng</BarButton>
                <IconButton aria-label="Settings"><Gear size={14} /></IconButton>
                <IconButton aria-label="Indicators">
                  <svg width="15" height="14" viewBox="0 0 15 14" fill="none" stroke="currentColor"><path d="M0 7l4-4 3 2 3-3 2 2 3-4" /><path d="M1 14V9M3.500 14V7M6 14V9M8.500 14V7M11 14V7M13.500 14V5" strokeWidth="1.300" /></svg>
                </IconButton>
                <IconButton aria-label="Reset">
                  <svg width="15" height="15" viewBox="0 0 15 15" fill="none" stroke="currentColor" strokeWidth="1.800"><path d="M6 2.500A5.500 5.500 0 1 1 2 7M8 0L5 2.500 8 5" /><circle cx="7.500" cy="8" r="2.300" fill="currentColor" stroke="none" /></svg>
                </IconButton>
                <ExpandButton aria-label="Full screen">
                  <svg width="16" height="16" viewBox="0 0 16 16" fill="none" stroke="currentColor" strokeWidth="2"><path d="M9 2h5v5M14 2L9 7M7 14H2V9M2 14l5-5" /></svg>
                </ExpandButton>
              </ChartBar>
              <ChartBody>
                <Tools>
                  {toolArt.map((art, i) => <Tool key={i} $on={i === 0}><ToolIcon>{art}</ToolIcon></Tool>)}
                  <ToolRule />
                  {toolArtLow.map((art, i) => <Tool key={i} $short><ToolIcon>{art}</ToolIcon></Tool>)}
                  <ToolRule />
                  {toolArtEnd.map((art, i) => <Tool key={i} $short><ToolIcon>{art}</ToolIcon></Tool>)}
                  <ToolMore aria-label="More tools">
                    <svg width="20" height="11" viewBox="0 0 20 11" fill="none" stroke="currentColor" strokeWidth="2"><path d="M1 1l9 8 9-8" /></svg>
                  </ToolMore>
                </Tools>
                <Plot>
                  <Chart />
                  <Legend>
                    <LegendTitle>
                      <CollapseIcon />
                      <LegendName>BTCUSDT, 5</LegendName>
                      <Chip aria-label="Format"><Gear size={13} /></Chip>
                      <Ohlc>O<b>43170</b></Ohlc>
                      <Ohlc>H<b>43170</b></Ohlc>
                      <Ohlc>L<b>43128</b></Ohlc>
                      <Ohlc>C<b>43153</b></Ohlc>
                    </LegendTitle>
                    {averages.map(([name, value, color]) => (
                      <LegendRow key={name} $color={color}>
                        <LegendText>{name}</LegendText>
                        <Chip aria-label="Format"><Gear size={13} /></Chip>
                        <Chip aria-label="Remove"><Cross /></Chip>
                        <output>{value}</output>
                      </LegendRow>
                    ))}
                  </Legend>
                  <VolumeLegend>
                    <LegendRow $color={c.red}>
                      <LegendText>Volume (20)</LegendText>
                      <Chip aria-label="Format"><Gear size={13} /></Chip>
                      <Chip aria-label="Remove"><Cross /></Chip>
                      <output>1.86</output>
                    </LegendRow>
                  </VolumeLegend>
                  <Credit href="#">
                    <svg width="27" height="18" viewBox="0 0 27 18"><path d="M1 16q-1-5 5-6 1-8 8-8 6 0 8 6 5 1 4 7-1 2-4 2H4q-2 0-3-1z" fill="#3ba9dd" /><path d="M2 14l8-7 6 7 7-6" fill="none" stroke="#1c1d22" strokeWidth="2" /></svg>
                    charts by TradingView
                  </Credit>
                  <QuickTrade>
                    <QuickEdge aria-label="Move">
                      <svg width="7" height="12" viewBox="0 0 7 12" fill="currentColor"><path d="M0 0h2v2H0zM5 0h2v2H5zM0 5h2v2H0zM5 5h2v2H5zM0 10h2v2H0zM5 10h2v2H5z" /></svg>
                    </QuickEdge>
                    <QuickSide $buy>Mở Mua<b>43143</b></QuickSide>
                    <QuickSize>Số lượng (BTC)<input placeholder="Nhập kích cỡ" /></QuickSize>
                    <QuickSide>Mở Bán<b>43136</b></QuickSide>
                    <QuickEdge aria-label="Close">
                      <svg width="8" height="8" viewBox="0 0 8 8" stroke="currentColor" strokeWidth="1.800"><path d="M1 1l6 6M7 1L1 7" /></svg>
                    </QuickEdge>
                  </QuickTrade>
                  <DrawerHandle aria-label="Collapse tools">
                    <svg width="4" height="16" viewBox="0 0 4 16"><path d="M4 0Q-4 8 4 16z" fill="#8b909a" /></svg>
                  </DrawerHandle>
                </Plot>
              </ChartBody>
              <Corner />
            </ChartPanel>

            <Middle>
              <Book>
                <Title>Thông tin ủy thác</Title>
                <BookModes>
                  {bookModes.map((mode, i) => (
                    <IconButton key={i} aria-label={`Book view ${i + 1}`}>
                      <svg width="15" height="13" viewBox="0 0 15 13">{mode.map(([d, f]) => <path key={d} d={d} fill={f} />)}</svg>
                    </IconButton>
                  ))}
                </BookModes>
                <DataTable>
                  <thead><HeadRow $tall><th>Giá tiền(USDT)</th><th>Số lượng(BTC)</th><th>Tổng(USDT)</th></HeadRow></thead>
                  <Rows rows={asks} ask />
                </DataTable>
                <MidPrice>
                  <strong>43149</strong>
                  <svg width="11" height="13" viewBox="0 0 11 13" fill="none" stroke={c.red} strokeWidth="2"><path d="M5.500 0v11M1 7l4.500 4.500L10 7" /></svg>
                  <p><Dotted>Giá tham chiếu</Dotted> 43131</p>
                </MidPrice>
                <Bids>
                  <DataTable>
                    <colgroup><col /><col width="131" /><col width="131" /></colgroup>
                    <Rows rows={bids} />
                  </DataTable>
                </Bids>
                <Corner />
              </Book>
              <Trades>
                <TradesTitle>Trades</TradesTitle>
                <DataTable>
                  <thead><HeadRow><th>Giá tiền(USDT)</th><th>Số lượng(BTC)</th><th>Thời gian</th></HeadRow></thead>
                  <tbody>
                    {trades.map(([p, q, t]) => <DataRow key={t}><td>{p}</td><td>{q}</td><td>{t}</td></DataRow>)}
                  </tbody>
                </DataTable>
                <Thumb />
                <Corner />
              </Trades>
            </Middle>
          </Upper>

          <Positions>
            <PositionsRow>
              <PositionTab $active>Vị thế(0)</PositionTab>
              <PositionTab>Đơn hàng hiện tại(0)</PositionTab>
              <PositionTab>Lịch sử đơn hàng</PositionTab>
              <PositionTab>Tài sản</PositionTab>
              <OnlyPair><CheckBox type="checkbox" />Chỉ xem BTCUSDT</OnlyPair>
              <CloseAll>Đóng tất cả</CloseAll>
            </PositionsRow>
          </Positions>
        </LeftArea>

        <Form onSubmit={stop}>
          <Modes><Mode type="button">Chéo</Mode><Mode type="button">10X</Mode></Modes>
          <OrderTabs>
            <OrderTab type="button" $active>Lệnh giới hạn</OrderTab>
            <OrderTab type="button">Lệnh thị trường</OrderTab>
            <OrderTab type="button">Lệnh có điều kiện</OrderTab>
          </OrderTabs>
          <Balance>
            <span><Dotted>Khả dụng:</Dotted> 0.00 USDT</span>
            <IconButton type="button" aria-label="Transfer">
              <svg width="15" height="15" viewBox="0 0 15 15" fill="none" stroke="#8b909a"><rect x="1" y="1" width="13" height="13" rx="1" strokeWidth="1.500" /><path d="M3.500 6h8L9 3.800M11.500 9h-8L6 11.200" strokeWidth="1.300" /></svg>
            </IconButton>
          </Balance>
          <Field>
            <label htmlFor="price">Giá tiền</label>
            <input id="price" defaultValue="43149" />
            <LastButton type="button">Cuối cùng</LastButton>
            <span>USDT</span>
          </Field>
          <Field>
            <Picker>
              <select aria-label="Số lượng"><option>Số lượng</option></select>
              <Caret $small />
            </Picker>
            <input aria-label="Số lượng" placeholder="Bội số nguyên của 0.0001" />
            <Unit>BTC</Unit>
          </Field>
          <Slider>
            <Stop /><Stop /><Stop /><Stop /><Stop />
            <input type="range" min="0" max="100" defaultValue="0" aria-label="Số lượng" />
          </Slider>
          <Row>
            <span><Key>Mua vào:</Key> -- BTC</span>
            <span><Key>Bán ra:</Key> -- BTC</span>
          </Row>
          <Rule />
          <OrderKinds>
            <TpSl><CheckBox type="checkbox" />TP/SL</TpSl>
            <Picker $light>
              <select aria-label="Các loại lệnh"><option>Các loại lệnh</option></select>
              <Caret $small $color="#eceef0" />
            </Picker>
          </OrderKinds>
          <Rule />
          <Submit>Vui lòng xác minh tài khoản trước khi giao dịch.</Submit>
          <CostRow>
            <span><Key>Chi phí:</Key> 0.00 USDT</span>
            <span><Key>Chi phí:</Key> 0.00 USDT</span>
          </CostRow>
          <Row>
            <span><Key>Tối đa:</Key> 0.0000 BTC</span>
            <span><Key>Tối đa:</Key> 0.0000 BTC</span>
          </Row>
          <MarginHead><Title>Chế độ ký quỹ</Title><MarginMode>Vượt qua</MarginMode></MarginHead>
          <MarginRow><Dotted>Tỷ lệ ký quỹ</Dotted><span>-- %</span></MarginRow>
          <MarginRow><Dotted>Ký quỹ duy trì</Dotted><span>0.00 USDT</span></MarginRow>
          <MarginRow><Dotted>Số dư tài sản đảm bảo</Dotted><span>0.00 USDT</span></MarginRow>
        </Form>
      </Main>
    </Page>
  );
}
